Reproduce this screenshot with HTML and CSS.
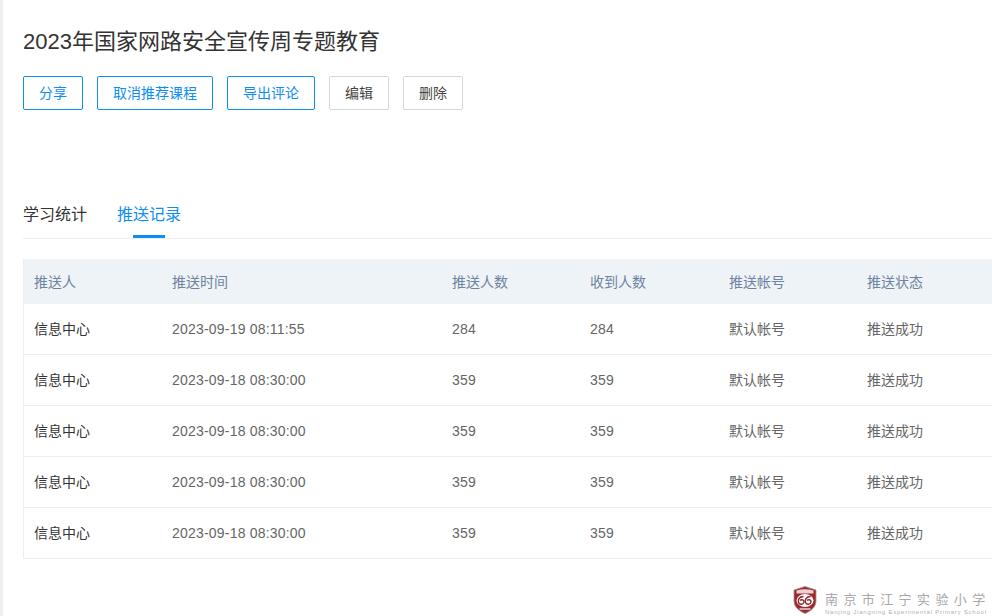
FILE: index.html
```html
<!DOCTYPE html>
<html lang="zh-CN">
<head>
    <meta charset="UTF-8">
    <title>2023年国家网络安全宣传周专题教育</title>
    <link rel="stylesheet" href="styles.css">
</head>
<body>
    <div class="main">
        <h2 class="title">2023年国家网路安全宣传周专题教育</h2>

        <div class="actions">
            <a class="btn btn-primary btn-share">分享</a>
            <a class="btn btn-primary btn-cancel">取消推荐课程</a>
            <a class="btn btn-primary btn-export">导出评论</a>
            <a class="btn btn-edit">编辑</a>
            <a class="btn btn-edit">删除</a>
        </div>

        <div class="tabs">
            <a class="tab">学习统计</a>
            <a class="tab active">推送记录</a>
        </div>

        <table class="record-table">
            <thead>
                <tr>
                    <th class="col-user">推送人</th>
                    <th class="col-time">推送时间</th>
                    <th class="col-total">推送人数</th>
                    <th class="col-got">收到人数</th>
                    <th class="col-account">推送帐号</th>
                    <th>推送状态</th>
                </tr>
            </thead>
            <tbody>
                <tr>
                    <td class="user">信息中心</td>
                    <td class="num">2023-09-19 08:11:55</td>
                    <td class="num">284</td>
                    <td class="num">284</td>
                    <td>默认帐号</td>
                    <td>推送成功</td>
                </tr>
                <tr>
                    <td class="user">信息中心</td>
                    <td class="num">2023-09-18 08:30:00</td>
                    <td class="num">359</td>
                    <td class="num">359</td>
                    <td>默认帐号</td>
                    <td>推送成功</td>
                </tr>
                <tr>
                    <td class="user">信息中心</td>
                    <td class="num">2023-09-18 08:30:00</td>
                    <td class="num">359</td>
                    <td class="num">359</td>
                    <td>默认帐号</td>
                    <td>推送成功</td>
                </tr>
                <tr>
                    <td class="user">信息中心</td>
                    <td class="num">2023-09-18 08:30:00</td>
                    <td class="num">359</td>
                    <td class="num">359</td>
                    <td>默认帐号</td>
                    <td>推送成功</td>
                </tr>
                <tr>
                    <td class="user">信息中心</td>
                    <td class="num">2023-09-18 08:30:00</td>
                    <td class="num">359</td>
                    <td class="num">359</td>
                    <td>默认帐号</td>
                    <td>推送成功</td>
                </tr>
            </tbody>
        </table>

        <div class="school">
            <svg class="school-logo" width="24" height="28" viewBox="0 0 24 28">
                <path d="M12 0.5 L23 4 V15 C23 21 18 25 12 27.5 C6 25 1 21 1 15 V4 Z" fill="#a3262b" stroke="#9a9a9a" stroke-width="0.8"/>
                <path d="M3.5 4.5 Q12 2 20.5 4.5 V7.5 H3.5 Z" fill="#e6d2d2"/>
                <ellipse cx="12" cy="14.5" rx="8.5" ry="6.5" fill="#fff"/>
                <path d="M10.5 10.5 C6 10.5 4.5 14 5.5 16.5 C6.5 19 10.5 19 11 16 C11.3 14 8.5 13 7 14.5" fill="none" stroke="#8e1f24" stroke-width="1.4"/>
                <path d="M17.5 10.5 C13 10.5 11.5 14 12.5 16.5 C13.5 19 17.5 19 18 16 C18.3 14 15.5 13 14 14.5" fill="none" stroke="#8e1f24" stroke-width="1.4"/>
                <path d="M6.5 23 H17.5" stroke="#e6d2d2" stroke-width="1.5"/>
            </svg>
            <div class="school-text">
                <div class="school-cn">南京市江宁实验小学</div>
                <div class="school-en">Nanjing Jiangning Experimental Primary School</div>
            </div>
        </div>
    </div>
</body>
</html>
```

FILE: styles.css
```css
* {
    margin: 0;
    padding: 0;
    box-sizing: border-box;
}

html, body {
    height: 100%;
    overflow: hidden;
}

body {
    font-family: "Liberation Sans", "Noto Sans CJK SC", sans-serif;
    background: #fff;
    border-left: 3px solid #eeeeee;
    color: #333;
    font-size: 14px;
}

.main {
    height: 616px;
    padding: 28px 0 0 20px;
    position: relative;
}

.title {
    font-size: 22px;
    font-weight: 400;
    line-height: 28px;
    color: #333;
}

.actions {
    display: flex;
    gap: 14px;
    margin-top: 20px;
}

.btn {
    display: block;
    height: 34px;
    line-height: 32px;
    text-align: center;
    font-size: 14px;
    border: 1px solid #d5d8de;
    border-radius: 2px;
    color: #444;
}

.btn-edit {
    width: 60px;
}

.btn-primary {
    border-color: #0d8ef2;
    color: #0d8ef2;
}

.btn-share {
    width: 60px;
}

.btn-cancel {
    width: 116px;
}

.btn-export {
    width: 88px;
}

.tabs {
    display: flex;
    gap: 30px;
    margin-top: 88px;
    height: 41px;
    border-bottom: 1px solid #eeeeee;
}

.tab {
    display: block;
    position: relative;
    font-size: 16px;
    line-height: 34px;
    color: #333;
}

.tab.active {
    color: #0d8ef2;
}

.tab.active::after {
    content: "";
    position: absolute;
    left: 16px;
    bottom: 0;
    width: 32px;
    height: 3px;
    background: #0d8ef2;
}

.record-table {
    width: 969px;
    margin-top: 20px;
    border-collapse: separate;
    border-spacing: 0;
    table-layout: fixed;
    border-left: 1px solid #eeeeee;
}

.record-table th {
    height: 45px;
    padding-left: 10px;
    background: #eef3f7;
    color: #6f83a0;
    font-weight: 400;
    font-size: 14px;
    line-height: 20px;
    text-align: left;
}

.record-table td {
    height: 51px;
    padding-left: 10px;
    color: #666;
    font-size: 14px;
    line-height: 20px;
    border-bottom: 1px solid #eeeeee;
}

.record-table td.user {
    color: #333;
}

.record-table td.num {
    letter-spacing: 0.2px;
}

.col-user {
    width: 138px;
}

.col-time {
    width: 280px;
}

.col-total {
    width: 138px;
}

.col-got {
    width: 139px;
}

.col-account {
    width: 138px;
}

.school {
    position: absolute;
    top: 586px;
    left: 790px;
    display: flex;
    gap: 8px;
    white-space: nowrap;
}

.school-text {
    padding-top: 3px;
}

.school-cn {
    font-family: "Noto Sans CJK SC", sans-serif;
    font-size: 13px;
    line-height: 20px;
    letter-spacing: 5.4px;
    color: #a8a8a8;
}

.school-en {
    font-family: "Liberation Sans", sans-serif;
    font-size: 6px;
    line-height: 7px;
    letter-spacing: 0.78px;
    color: #b0b0b0;
}
```
